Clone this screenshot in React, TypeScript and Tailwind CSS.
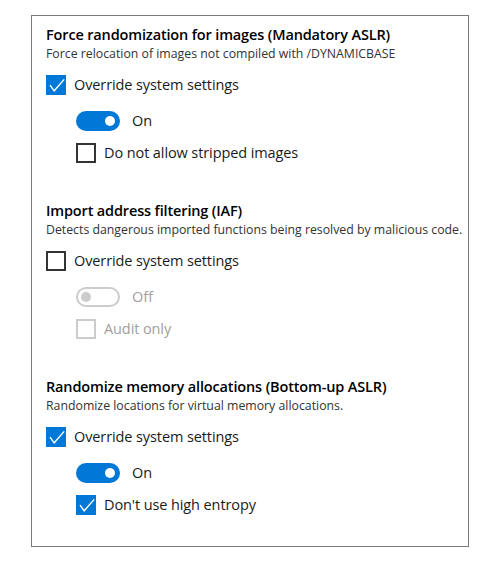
import React from "react";

type Opt = {
  title: string;
  sub: string;
  override: boolean;
  toggle: boolean;
  childLabel: string;
  childChecked: boolean;
};

const sections: Opt[] = [
  {
    title: "Force randomization for images (Mandatory ASLR)",
    sub: "Force relocation of images not compiled with /DYNAMICBASE",
    override: true,
    toggle: true,
    childLabel: "Do not allow stripped images",
    childChecked: false,
  },
  {
    title: "Import address filtering (IAF)",
    sub: "Detects dangerous imported functions being resolved by malicious code.",
    override: false,
    toggle: false,
    childLabel: "Audit only",
    childChecked: false,
  },
  {
    title: "Randomize memory allocations (Bottom-up ASLR)",
    sub: "Randomize locations for virtual memory allocations.",
    override: true,
    toggle: true,
    childLabel: "Don't use high entropy",
    childChecked: true,
  },
];

const Check = ({ checked, disabled }: { checked: boolean; disabled?: boolean }) => {
  if (checked) {
    return (
      <div className="w-5 h-5 bg-[#0078d7] flex items-center justify-center shrink-0">
        <svg width="20" height="20" viewBox="0 0 20 20">
          <path d="M4 10.2 L8.2 15.8 L18.2 4.4" fill="none" stroke="#fff" strokeWidth="1.4" />
        </svg>
      </div>
    );
  }
  return (
    <div
      className={`w-5 h-5 border-2 shrink-0 ${disabled ? "border-[#cccccc]" : "border-[#333333]"}`}
    />
  );
};

const Toggle = ({ on, disabled }: { on: boolean; disabled?: boolean }) =>
  on ? (
    <div className="w-[44px] h-5 rounded-full bg-[#0078d7] flex items-center justify-end pr-[5px] shrink-0">
      <div className="w-[10px] h-[10px] rounded-full bg-white" />
    </div>
  ) : (
    <div
      className={`w-[44px] h-5 rounded-full border-2 flex items-center pl-[3px] shrink-0 ${disabled ? "border-[#cccccc]" : "border-[#333333]"}`}
    >
      <div className={`w-[10px] h-[10px] rounded-full ${disabled ? "bg-[#cccccc]" : "bg-[#333333]"}`} />
    </div>
  );

export default function App() {
  return (
    <div
      className="w-[503px] h-[574px] bg-white pt-[15px] pl-[31px]"
      style={{ fontFamily: '"Open Sans", "Noto Sans", sans-serif' }}
    >
      <div className="w-[438px] h-[532px] border border-[#7a7a7a] px-[14px] pt-[9px] flex flex-col">
        {sections.map((s, i) => {
          const dis = !s.override;
          return (
            <div key={i} className={`flex flex-col ${i > 0 ? "mt-[38px]" : ""}`}>
              {/* header */}
              <div className="text-[14.5px] leading-[20px] font-semibold text-black tracking-[-0.15px] whitespace-nowrap">
                {s.title}
              </div>
              <div className="text-[12.3px] leading-[16px] text-[#333] mt-[1px] whitespace-nowrap">
                {s.sub}
              </div>

              {/* override */}
              <div className="flex items-center gap-[8px] mt-[13px] h-5">
                <Check checked={s.override} />
                <span className="text-[14.5px] text-[#1a1a1a] tracking-[-0.1px]">Override system settings</span>
              </div>

              {/* nested */}
              <div className="flex flex-col pl-[30px]">
                <div className="flex items-center gap-[12px] mt-[16px] h-5">
                  <Toggle on={s.toggle} disabled={dis} />
                  <span className={`text-[14.5px] ${dis ? "text-[#a0a0a0]" : "text-[#1a1a1a]"}`}>
                    {s.toggle ? "On" : "Off"}
                  </span>
                </div>
                <div className="flex items-center gap-[8px] mt-[12px] h-5">
                  <Check checked={s.childChecked} disabled={dis} />
                  <span className={`text-[14.5px] tracking-[-0.1px] ${dis ? "text-[#a0a0a0]" : "text-[#1a1a1a]"}`}>
                    {s.childLabel}
                  </span>
                </div>
              </div>
            </div>
          );
        })}
      </div>
    </div>
  );
}
